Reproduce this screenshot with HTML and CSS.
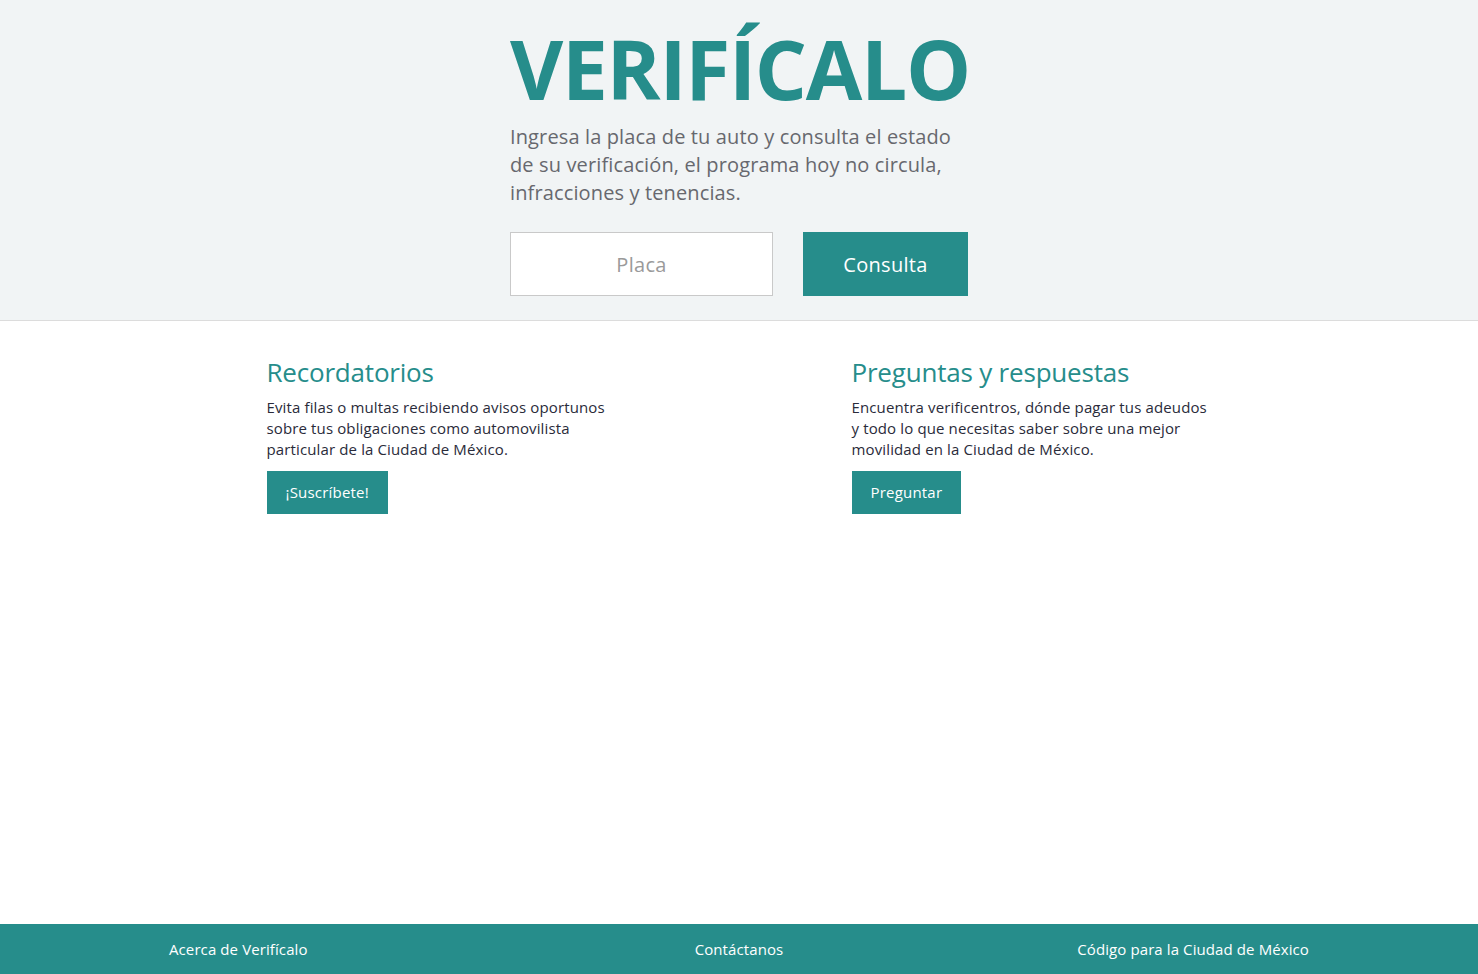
FILE: index.html
```html
<!DOCTYPE html>
<html lang="es">
<head>
<meta charset="utf-8">
<title>Verifícalo</title>
<link rel="stylesheet" href="styles.css">
</head>
<body>
<div class="page">
  <header class="hero">
    <div class="hero-inner">
      <h1 class="brand">VERIFÍCALO</h1>
      <p class="lead">Ingresa la placa de tu auto y consulta el estado de su verificación, el programa hoy no circula, infracciones y tenencias.</p>
      <form class="search">
        <input class="plate" type="text" placeholder="Placa">
        <button class="submit" type="button">Consulta</button>
      </form>
    </div>
  </header>
  <main class="content">
    <div class="container cols">
      <section class="col">
        <div class="card">
          <h2 class="card-title">Recordatorios</h2>
          <p class="card-text">Evita filas o multas recibiendo avisos oportunos sobre tus obligaciones como automovilista particular de la Ciudad de México.</p>
          <a class="btn" href="#">¡Suscríbete!</a>
        </div>
      </section>
      <section class="col">
        <div class="card">
          <h2 class="card-title">Preguntas y respuestas</h2>
          <p class="card-text">Encuentra verificentros, dónde pagar tus adeudos y todo lo que necesitas saber sobre una mejor movilidad en la Ciudad de México.</p>
          <a class="btn" href="#">Preguntar</a>
        </div>
      </section>
    </div>
  </main>
  <footer class="footer">
    <div class="container foot-cols">
      <a class="foot-link left" href="#">Acerca de Verifícalo</a>
      <a class="foot-link center" href="#">Contáctanos</a>
      <a class="foot-link right" href="#">Código para la Ciudad de México</a>
    </div>
  </footer>
</div>
</body>
</html>
```
FILE: styles.css
```css
* { box-sizing: border-box; }
html, body { margin: 0; padding: 0; height: 100%; }
body {
  font-family: "Open Sans", "Liberation Sans", sans-serif;
  background: #ffffff;
  color: #2a2b3a;
}
.page {
  min-height: 100vh;
  display: flex;
  flex-direction: column;
}
.hero {
  background: #f1f4f5;
  border-bottom: 1px solid #dcdcdc;
  padding: 20px 0 24px;
}
.hero-inner {
  width: 458px;
  margin: 0 auto;
}
.brand {
  margin: 0;
  font-size: 82px;
  font-weight: 700;
  line-height: 96px;
  color: #268d8b;
  letter-spacing: -1.3px;
}
.lead {
  margin: 7px 0 0;
  font-size: 20px;
  line-height: 28px;
  color: #67686e;
  letter-spacing: 0.13px;
}
.search {
  display: flex;
  gap: 30px;
  margin-top: 25px;
}
.plate {
  width: 263px;
  height: 64px;
  border: 1px solid #c9c9c9;
  background: #fff;
  font-family: inherit;
  font-size: 20px;
  text-align: center;
  color: #555;
  padding: 0;
  outline: none;
  letter-spacing: 0.3px;
}
.plate::placeholder { color: #9a9a9a; }
.submit {
  width: 165px;
  height: 64px;
  border: 0;
  background: #268d8b;
  color: #fff;
  font-family: inherit;
  font-size: 20px;
  letter-spacing: 0.3px;
  cursor: pointer;
}
.content { flex: 1; }
.container {
  width: 1170px;
  margin: 0 auto;
}
.cols {
  display: grid;
  grid-template-columns: 1fr 1fr;
  padding-top: 33px;
}
.col { padding: 0 15px; }
.card {
  width: 360px;
  margin: 0 auto;
}
.card-title {
  margin: 0;
  font-size: 26px;
  font-weight: 400;
  line-height: 36px;
  color: #268d8b;
  letter-spacing: -0.2px;
}
.card-text {
  margin: 7px 0 11px;
  font-size: 15px;
  line-height: 21px;
  color: #2a2b3a;
  letter-spacing: 0.13px;
}
.btn {
  display: inline-block;
  background: #268d8b;
  color: #fff;
  text-decoration: none;
  font-size: 15px;
  line-height: 21px;
  padding: 11px 19px;
  letter-spacing: 0.2px;
}
.footer {
  background: #268d8b;
  height: 50px;
}
.foot-cols {
  display: grid;
  grid-template-columns: 1fr 1fr 1fr;
  height: 50px;
  align-items: center;
}
.foot-link {
  padding: 0 15px;
  color: #fff;
  text-decoration: none;
  font-size: 15px;
  letter-spacing: 0.1px;
}
.left { text-align: left; }
.center { text-align: center; }
.right { text-align: right; }
```
